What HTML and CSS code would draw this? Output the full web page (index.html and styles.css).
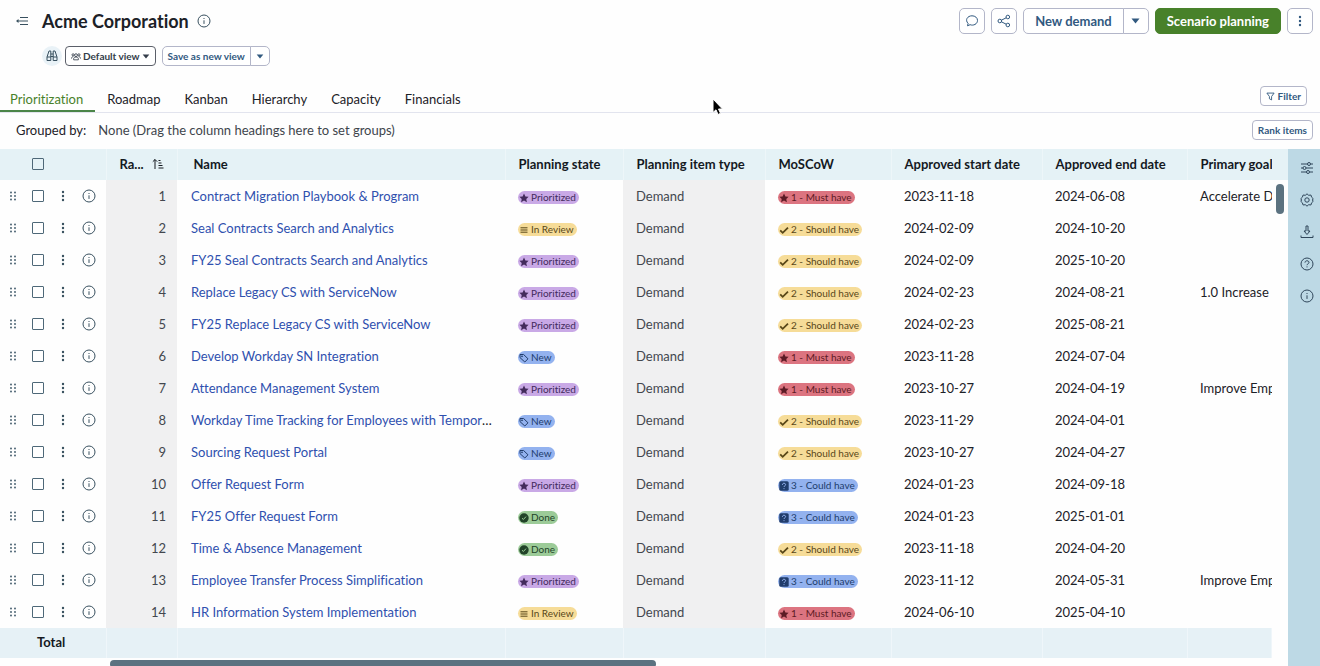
FILE: index.html
```html
<!DOCTYPE html>
<html lang="en">
<head>
    <meta charset="UTF-8">
    <meta name="viewport" content="width=device-width, initial-scale=1.0">
    <title>Acme Corporation - Prioritization</title>
    <link rel="stylesheet" href="styles.css">
</head>
<body>
<!-- Shared icons -->
<svg class="sprite" aria-hidden="true">
    <symbol id="i-info" viewBox="0 0 14 14"><circle cx="7" cy="7" r="6"/><path d="M7 6.3v3.6M7 4v1"/></symbol>
    <symbol id="i-dots" viewBox="0 0 14 14"><g fill="currentColor" stroke="none"><circle cx="7" cy="3" r="1.2"/><circle cx="7" cy="7" r="1.2"/><circle cx="7" cy="11" r="1.2"/></g></symbol>
    <symbol id="i-drag" viewBox="0 0 14 14"><g fill="currentColor" stroke="none"><circle cx="5" cy="3.5" r=".9"/><circle cx="9" cy="3.5" r=".9"/><circle cx="5" cy="7" r=".9"/><circle cx="9" cy="7" r=".9"/><circle cx="5" cy="10.5" r=".9"/><circle cx="9" cy="10.5" r=".9"/></g></symbol>
    <symbol id="i-caret" viewBox="0 0 8 6"><path d="M0 .5h8L4 5.5z" fill="currentColor" stroke="none"/></symbol>
    <symbol id="i-star" viewBox="0 0 10 10"><path d="M5 .5l1.4 2.9 3.2.4-2.3 2.2.6 3.2L5 7.6 2.1 9.2l.6-3.2L.4 3.8l3.2-.4z" fill="currentColor" stroke="none"/></symbol>
    <symbol id="i-lines" viewBox="0 0 10 10"><path d="M1.5 2.8h7M1.5 5h7M1.5 7.2h7"/></symbol>
    <symbol id="i-tag" viewBox="0 0 10 10"><path d="M1 1.5h3.6L9 5.8 5.8 9 1 4.6z"/><circle cx="3" cy="3.3" r=".5"/></symbol>
    <symbol id="i-done" viewBox="0 0 10 10"><circle cx="5" cy="5" r="4.7" fill="currentColor" stroke="none"/><path d="M3 5.2l1.4 1.3L7 3.6" stroke="#9ccb98"/></symbol>
    <symbol id="i-check" viewBox="0 0 10 10"><path d="M1.2 5.4l2.5 2.4L9 2.6" stroke-width="1.8"/></symbol>
    <symbol id="i-quest" viewBox="0 0 10 10"><rect x=".3" y=".3" width="9.4" height="9.4" rx="1.5" fill="currentColor" stroke="none"/><path d="M3.4 3.8c0-2.2 3.2-2 3.2-.1C6.6 4.8 5 4.8 5 6M5 7.2v.9" stroke="#93b2ef"/></symbol>
</svg>

<header class="page-header">
    <div class="title-row">
        <button class="icon-btn" aria-label="Collapse menu"><svg class="collapse" viewBox="0 0 12 10"><path d="M4 1.5h8M4 5h8M4 8.5h8M1 5h3"/><path d="M0 5l2.5-2v4z" fill="currentColor" stroke="none"/></svg></button>
        <h1>Acme Corporation</h1>
        <button class="icon-btn" aria-label="About"><svg class="icon"><use href="#i-info"/></svg></button>
        <div class="actions">
            <button class="btn square" aria-label="Comments"><svg class="icon" viewBox="0 0 14 14"><path d="M2.5 11.8l.6-2.4C-.3 6 2.5 1.8 7 1.8c3.2 0 5.5 2 5.5 4.6 0 3.7-4.2 5.6-7.4 4.3z"/></svg></button>
            <button class="btn square" aria-label="Share"><svg class="icon" viewBox="0 0 14 14"><circle cx="2.8" cy="7" r="1.8"/><circle cx="10.8" cy="3" r="1.8"/><circle cx="10.8" cy="11" r="1.8"/><path d="M4.4 6.2l4.8-2.4M4.4 7.8l4.8 2.4"/></svg></button>
            <div class="split">
                <button class="btn">New demand</button>
                <button class="btn more" aria-label="More demand options"><svg class="caret"><use href="#i-caret"/></svg></button>
            </div>
            <button class="btn primary">Scenario planning</button>
            <button class="btn square" aria-label="More actions"><svg class="icon"><use href="#i-dots"/></svg></button>
        </div>
    </div>
    <div class="view-row">
        <button class="find" aria-label="Find view"><svg class="icon" viewBox="0 0 14 14"><path d="M4 2h1.8v9.5H2V8zM8.2 2H10l2 6v3.5H8.2zM5.8 5h2.4M5.8 7.5h2.4M2 8h3.8M8.2 8H12"/></svg></button>
        <button class="btn small dark"><svg class="people" viewBox="0 0 12 10"><circle cx="2.5" cy="3" r="1.3"/><circle cx="9.5" cy="3" r="1.3"/><circle cx="6" cy="3.4" r="1.7"/><path d="M3.2 9V7.5c0-2.4 5.6-2.4 5.6 0V9zM.6 7.5c0-1.6.8-2.3 2.2-2.3M11.4 7.5c0-1.6-.8-2.3-2.2-2.3"/></svg>Default view<svg class="caret"><use href="#i-caret"/></svg></button>
        <div class="split">
            <button class="btn small">Save as new view</button>
            <button class="btn small more" aria-label="More save options"><svg class="caret"><use href="#i-caret"/></svg></button>
        </div>
    </div>
</header>

<nav class="tabs">
    <a href="#" class="active">Prioritization</a>
    <a href="#">Roadmap</a>
    <a href="#">Kanban</a>
    <a href="#">Hierarchy</a>
    <a href="#">Capacity</a>
    <a href="#">Financials</a>
    <button class="btn small filter"><svg class="funnel" viewBox="0 0 10 10"><path d="M1 1.2h8L6.2 5v3.8L3.8 7.5V5z"/></svg>Filter</button>
</nav>

<div class="group-bar">
    <span class="label">Grouped by:</span>
    <span>None (Drag the column headings here to set groups)</span>
    <button class="btn small">Rank items</button>
</div>

<main class="workspace">
    <div class="grid">
        <div class="grid-view">
            <table>
                <colgroup>
                    <col class="c-tools"><col class="c-rank"><col class="c-name"><col class="c-state"><col class="c-type"><col class="c-moscow"><col class="c-start"><col class="c-end"><col>
                </colgroup>
                <thead>
                    <tr>
                        <th><div class="tools"><span class="slot"></span><input type="checkbox" aria-label="Select all"></div></th>
                        <th><div class="rank-head">Ra...<svg class="sort" viewBox="0 0 12 12"><path d="M3 11V1.5M.8 3.7L3 1.5l2.2 2.2M6.500 2.500h2M6.500 5h3M6.500 7.500h4M6.500 10h5"/></svg></div></th>
                        <th class="name">Name</th>
                        <th>Planning state</th>
                        <th>Planning item type</th>
                        <th>MoSCoW</th>
                        <th>Approved start date</th>
                        <th>Approved end date</th>
                        <th>Primary goal</th>
                    </tr>
                </thead>
                <tbody id="rows"></tbody>
                <tfoot>
                    <tr><th>Total</th><td></td><td></td><td></td><td></td><td></td><td></td><td></td><td></td></tr>
                </tfoot>
            </table>
            <div class="scroll-x"><div class="thumb"></div></div>
        </div>
        <div class="scroll-y"><div class="thumb"></div></div>
    </div>
    <aside class="rail">
        <button class="icon-btn" aria-label="Columns"><svg class="icon" viewBox="0 0 14 14"><path d="M1 3h6.5M10.5 3H13M1 7h2M6 7h7M1 11h5.500M9.500 11H13"/><circle cx="9" cy="3" r="1.5"/><circle cx="4.5" cy="7" r="1.5"/><circle cx="8" cy="11" r="1.5"/></svg></button>
        <button class="icon-btn" aria-label="Settings"><svg class="icon" viewBox="0 0 14 14"><path d="M7 .8l1.7 1.5 2.200-.3.7 2.200 1.600 1.500-.8 1.300.8 1.300-1.600 1.500-.7 2.200-2.200-.3L7 13.200l-1.700-1.500-2.200.3-.7-2.200L.8 8.300 1.600 7 .8 5.700l1.600-1.500.7-2.200 2.200.3z"/><circle cx="7" cy="7" r="2.2"/></svg></button>
        <button class="icon-btn" aria-label="Download"><svg class="icon" viewBox="0 0 14 14"><path d="M6 1h2v5h2L7 9.5 4 6h2zM1 10.5v2h12v-2"/></svg></button>
        <button class="icon-btn" aria-label="Help"><svg class="icon" viewBox="0 0 14 14"><circle cx="7" cy="7" r="6"/><path d="M5 5.6c0-2.5 4-2.3 4-.2 0 1.4-2 1.4-2 2.8M7 9.4v1"/></svg></button>
        <button class="icon-btn" aria-label="Details"><svg class="icon"><use href="#i-info"/></svg></button>
    </aside>
</main>

<svg class="pointer" viewBox="0 0 12 18" aria-hidden="true"><path d="M1 1v13.5l3-2.7L6 16.5l2.5-1.2-2-4.3H10.500z"/></svg>
<script src="script.js"></script>
</body>
</html>
```

FILE: styles.css
```css
*{box-sizing:border-box;}
body{margin:0;height:100vh;display:flex;flex-direction:column;overflow:hidden;background:#fefefe;color:#1c2127;font-family:Lato,"Liberation Sans",sans-serif;font-size:13px;line-height:20px;font-variant-ligatures:none;}
button{font-family:inherit;cursor:pointer;}
svg{display:block;flex:none;fill:none;stroke:currentColor;stroke-width:1;}
.sprite{display:none;}
.icon{width:14px;height:14px;}
.icon-btn{display:flex;padding:0;border:0;background:none;color:#38505f;}

/* buttons */
.btn{display:flex;align-items:center;justify-content:center;height:26px;padding:0 11px;border:1px solid #b3b6c9;border-radius:5px;background:#fff;color:#31597f;font-size:13px;font-weight:700;white-space:nowrap;}
.btn.square{width:26px;padding:0;}
.btn.primary{background:#48812a;border-color:#48812a;color:#fff;}
.btn.small{height:20px;padding:0 5px;border-radius:4px;font-size:10px;}
.btn.dark{gap:2px;border-color:#5b5f69;color:#343d4a;}
.split{display:flex;}
.split .btn:first-child{border-radius:5px 0 0 5px;}
.split .btn.more{width:26px;margin-left:-1px;padding:0;border-radius:0 5px 5px 0;}
.split .btn.small.more{width:20px;}
.caret{width:9px;height:6px;}
.small .caret{width:8px;height:5px;}
.people{width:10px;height:9px;}
.funnel{width:9px;height:9px;}

/* header */
.title-row{display:flex;align-items:center;height:42px;padding:0 7px 0 16px;}
.collapse{width:12px;height:10px;}
h1{margin:0 8px 0 14px;font-size:18px;line-height:24px;padding-bottom:1px;font-weight:700;}
.actions{display:flex;gap:6px;margin-left:auto;}
.view-row{display:flex;align-items:center;gap:6px;height:28px;padding-left:42px;}
.find{display:flex;align-items:center;justify-content:center;width:20px;height:20px;margin-right:-3px;padding:0;border:0;border-radius:50%;background:#e9f2f7;color:#38505f;}

/* tabs */
.tabs{display:flex;align-items:flex-end;height:43px;padding-right:13px;border-bottom:1px solid #e2e4ee;}
.tabs a{height:27px;padding:4px 12px 0;color:#1c2127;font-size:13px;text-decoration:none;}
.tabs .active{padding-left:10px;border-bottom:2px solid #4b8548;color:#48812a;}
.tabs .filter{gap:3px;margin:0 0 6px auto;}
.group-bar{display:flex;align-items:center;height:36px;padding:0 7px 2px 16px;color:#40454c;}
.group-bar .label{margin-right:12px;color:#1c2127;}
.group-bar .btn{margin-left:auto;}

/* grid */
.workspace{display:flex;flex:1;min-height:0;}
.grid{display:flex;flex:1;min-width:0;background:linear-gradient(#e5f2f6 31px,transparent 31px);}
.grid-view{flex:1;min-width:0;overflow:hidden;}
table{width:100%;table-layout:fixed;border-collapse:collapse;}
.c-tools{width:106px;}
.c-rank{width:71px;}
.c-name{width:328px;}
.c-state{width:118px;}
.c-type{width:142px;}
.c-moscow{width:126px;}
.c-start{width:151px;}
.c-end{width:145px;}
th,td{padding:0 0 0 13px;overflow:hidden;text-align:left;white-space:nowrap;}
th:first-child,td:first-child{padding-left:6px;}
thead th{height:31px;padding-bottom:2px;border-right:1px solid #edf6f9;background:#e5f2f6;color:#14191f;font-size:13px;}
thead th.name{padding-left:16px;}
thead th:last-child,tfoot td:last-child{border-right:0;}
td{height:32px;}
td:nth-child(2),td:nth-child(5){background:#f0f0f1;color:#43474e;}
td:nth-child(2){padding-right:11px;text-align:right;}
td:nth-child(3){padding:0 12px 0 14px;text-overflow:ellipsis;}
td a{color:#2f50ae;text-decoration:none;}
tfoot th,tfoot td,tfoot td:nth-child(n){height:30px;padding-bottom:2px;border-right:1px solid #eff6fa;background:#e6f1f6;color:#14191f;font-size:13px;}
tfoot th:first-child{padding-left:37px;}
.rank-head{display:flex;align-items:center;gap:8px;}
.sort{width:12px;height:12px;}
.tools{display:flex;align-items:center;gap:12px;color:#3b5566;}
.slot{width:14px;}
.tools input{appearance:none;width:12px;height:12px;margin:0;border:1px solid #4e6878;border-radius:1px;background:#fff;}
thead .tools input{background:transparent;}

/* pills */
.pill{display:inline-flex;align-items:center;gap:2px;height:13px;padding:0 3px 0 1px;border-radius:7px;font-size:10px;line-height:13px;vertical-align:middle;}
.pill svg{width:10px;height:10px;}
.purple{background:#c9a9e6;color:#432b5c;}
.yellow{background:#f6dc98;color:#594718;}
.blue{background:#93b2ef;color:#213d6c;}
.green{background:#9ccb98;color:#214328;}
.red{background:#dc7480;color:#5c1b25;}

/* scrollbars */
.thumb{border-radius:4px;background:#5b7280;}
.scroll-x{padding:2px 0 0 110px;}
.scroll-x .thumb{width:47%;height:8px;}
.scroll-y{width:16px;padding:35px 4px 0;}
.scroll-y .thumb{height:30px;}
.rail{display:flex;flex-direction:column;align-items:center;gap:18px;width:32px;padding:12px 0 0 5px;background:#bdd9e5;}
.rail .icon-btn{color:#30475b;}
.pointer{position:absolute;left:712px;top:98px;width:12px;height:18px;fill:#000;stroke:#fff;}
```

FILE: script.js
```javascript
const states = {
    'Prioritized': ['purple', 'star'],
    'In Review': ['yellow', 'lines'],
    'New': ['blue', 'tag'],
    'Done': ['green', 'done'],
    '1 - Must have': ['red', 'star'],
    '2 - Should have': ['yellow', 'check'],
    '3 - Could have': ['blue', 'quest']
};

const items = [
    ['Contract Migration Playbook &amp; Program', 'Prioritized', '1 - Must have', '2023-11-18', '2024-06-08', 'Accelerate D'],
    ['Seal Contracts Search and Analytics', 'In Review', '2 - Should have', '2024-02-09', '2024-10-20', ''],
    ['FY25 Seal Contracts Search and Analytics', 'Prioritized', '2 - Should have', '2024-02-09', '2025-10-20', ''],
    ['Replace Legacy CS with ServiceNow', 'Prioritized', '2 - Should have', '2024-02-23', '2024-08-21', '1.0 Increase'],
    ['FY25 Replace Legacy CS with ServiceNow', 'Prioritized', '2 - Should have', '2024-02-23', '2025-08-21', ''],
    ['Develop Workday SN Integration', 'New', '1 - Must have', '2023-11-28', '2024-07-04', ''],
    ['Attendance Management System', 'Prioritized', '1 - Must have', '2023-10-27', '2024-04-19', 'Improve Emp'],
    ['Workday Time Tracking for Employees with Temporary', 'New', '2 - Should have', '2023-11-29', '2024-04-01', ''],
    ['Sourcing Request Portal', 'New', '2 - Should have', '2023-10-27', '2024-04-27', ''],
    ['Offer Request Form', 'Prioritized', '3 - Could have', '2024-01-23', '2024-09-18', ''],
    ['FY25 Offer Request Form', 'Done', '3 - Could have', '2024-01-23', '2025-01-01', ''],
    ['Time &amp; Absence Management', 'Done', '2 - Should have', '2023-11-18', '2024-04-20', ''],
    ['Employee Transfer Process Simplification', 'Prioritized', '3 - Could have', '2023-11-12', '2024-05-31', 'Improve Emp'],
    ['HR Information System Implementation', 'In Review', '1 - Must have', '2024-06-10', '2025-04-10', '']
];

function icon(name) {
    return `<svg class="icon"><use href="#i-${name}"/></svg>`;
}

function pill(text) {
    const [color, name] = states[text];
    return `<span class="pill ${color}">${icon(name)}${text}</span>`;
}

document.getElementById('rows').innerHTML = items.map(([name, state, moscow, start, end, goal], i) => `
    <tr>
        <td><div class="tools">${icon('drag')}<input type="checkbox" aria-label="Select row ${i + 1}"><button class="icon-btn" aria-label="Row menu">${icon('dots')}</button><button class="icon-btn" aria-label="Row details">${icon('info')}</button></div></td>
        <td>${i + 1}</td>
        <td><a href="#">${name}</a></td>
        <td>${pill(state)}</td>
        <td>Demand</td>
        <td>${pill(moscow)}</td>
        <td>${start}</td>
        <td>${end}</td>
        <td>${goal}</td>
    </tr>`).join('');
```
